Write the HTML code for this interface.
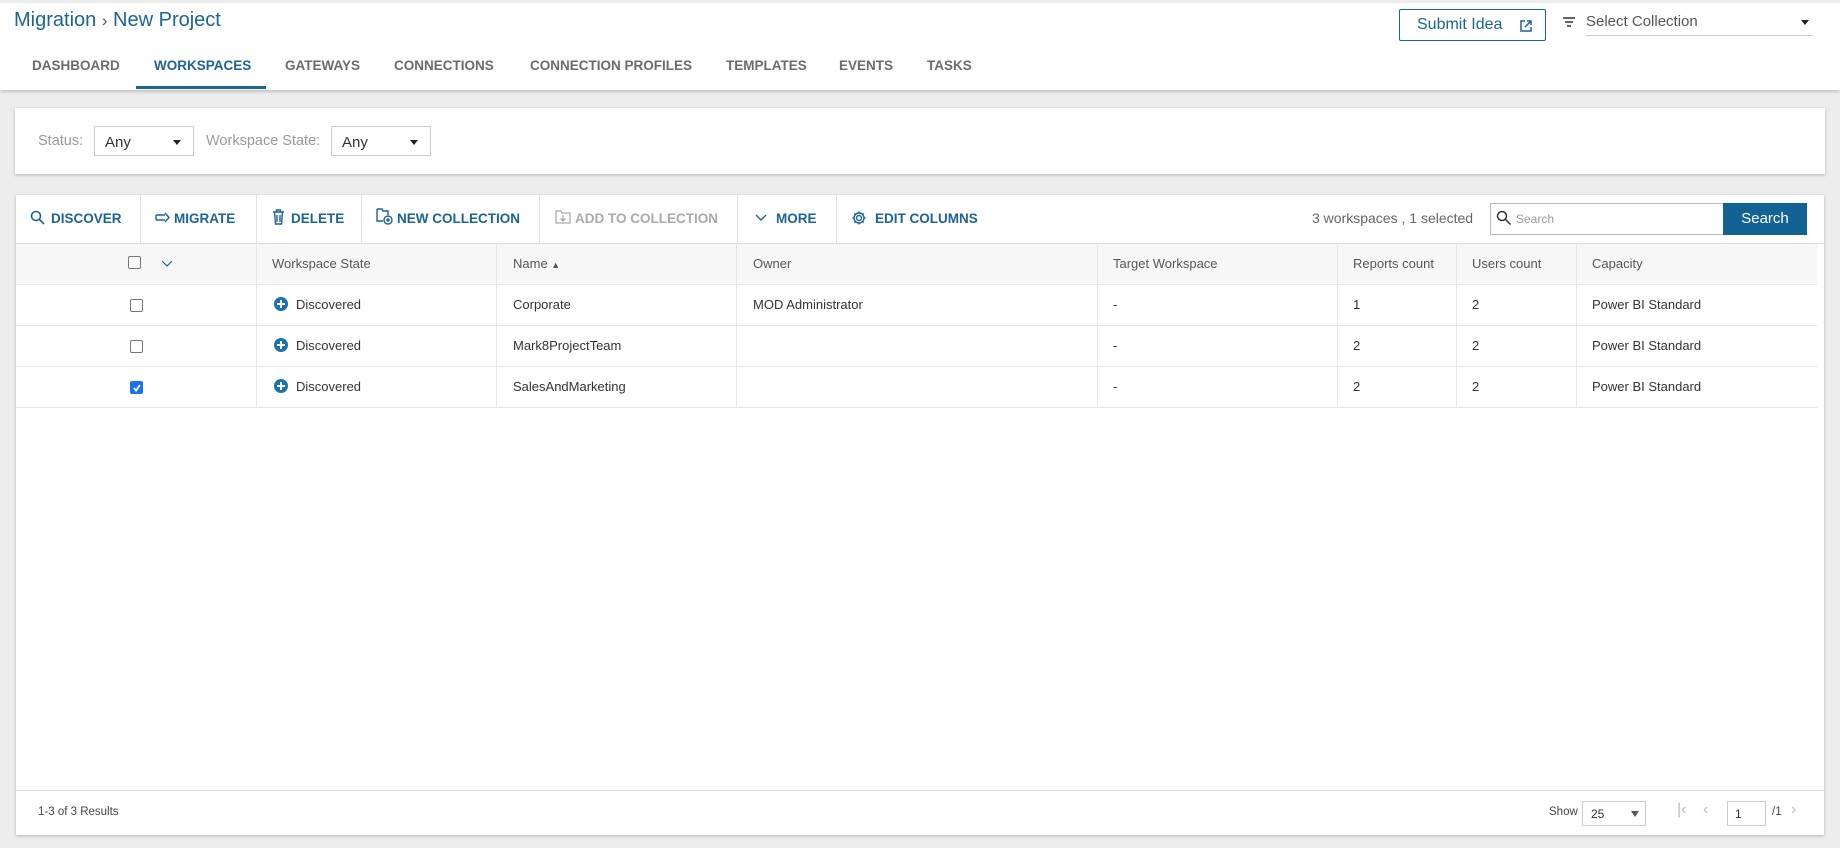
<!DOCTYPE html>
<html><head><meta charset="utf-8"><style>
*{box-sizing:border-box;margin:0;padding:0}
body{width:1840px;height:848px;background:#ededed;font-family:"Liberation Sans",sans-serif;position:relative;overflow:hidden;color:#333}
.a{position:absolute;white-space:nowrap}
#hdr{position:absolute;left:0;top:3px;width:1840px;height:87px;background:#fff;box-shadow:0 2px 3px rgba(0,0,0,.18)}
.tab{position:absolute;top:58px;font-size:13.5px;font-weight:bold;color:#6b6b6b}
.panel{position:absolute;background:#fff;box-shadow:0 1px 3px rgba(0,0,0,.25)}
.sel{position:absolute;border:1px solid #ccc;background:#fff;font-size:15px;color:#333;padding:7px 10px}
.sel:after{content:"";position:absolute;right:12px;top:13px;border:4px solid transparent;border-top:5px solid #222}
.tb{position:absolute;top:211px;font-size:13.5px;font-weight:bold;color:#1b6496}
.vs{position:absolute;top:195px;width:1px;height:48px;background:#e2e2e2}
.cell{position:absolute;font-size:13px;color:#333}
.hl{position:absolute;left:16px;width:1801px;height:1px;background:#e6e6e6}
.vl{position:absolute;width:1px;background:#e6e6e6;top:243px;height:164px}
.cb{position:absolute;width:13px;height:13px;border:1px solid #777;border-radius:2px;background:#fff}
.disc{position:absolute;width:14px;height:14px;border-radius:50%;background:#1a73b0}
.disc:before{content:"";position:absolute;left:3px;top:6px;width:8px;height:2px;background:#fff}
.disc:after{content:"";position:absolute;left:6px;top:3px;width:2px;height:8px;background:#fff}
</style></head><body>
<div id="hdr"></div>
<div class="a" style="left:14px;top:9px;font-size:20px;color:#1b6496">Migration <span style="font-size:17px;color:#555">&#8250;</span> New Project</div>
<div class="a" style="left:1399px;top:9px;width:147px;height:32px;border:1px solid #1b6496;border-radius:2px;font-size:16px;color:#1b6496;padding:6px 0 0 17px">Submit Idea
<svg style="position:absolute;left:120px;top:10px" width="12" height="12" viewBox="0 0 12 12" fill="none" stroke="#1b6496" stroke-width="1.5"><path d="M5 1H1v10h10V7M7 1h4v4M11 1L5 7"/></svg></div>
<svg class="a" style="left:1563px;top:17px" width="12" height="10" viewBox="0 0 12 10" stroke="#333" stroke-width="1.5"><path d="M0 1h12M2 5h8M4 9h4"/></svg>
<div class="a" style="left:1586px;top:13px;font-size:15px;color:#555">Select Collection</div>
<div class="a" style="left:1586px;top:35px;width:227px;height:1px;background:#ccc"></div>
<div class="a" style="left:1801px;top:20px;border:4px solid transparent;border-top:5px solid #222"></div>
<div class="tab" style="left:32px">DASHBOARD</div>
<div class="tab" style="left:154px;color:#1b6496">WORKSPACES</div>
<div class="a" style="left:136px;top:86px;width:130px;height:3px;background:#1b6496"></div>
<div class="tab" style="left:285px">GATEWAYS</div>
<div class="tab" style="left:394px">CONNECTIONS</div>
<div class="tab" style="left:530px">CONNECTION PROFILES</div>
<div class="tab" style="left:726px">TEMPLATES</div>
<div class="tab" style="left:839px">EVENTS</div>
<div class="tab" style="left:927px">TASKS</div>

<div class="panel" style="left:15px;top:108px;width:1810px;height:66px"></div>
<div class="a" style="left:38px;top:133px;font-size:14.5px;color:#999">Status:</div>
<div class="sel" style="left:94px;top:126px;width:100px;height:30px">Any</div>
<div class="a" style="left:206px;top:133px;font-size:14.5px;color:#999">Workspace State:</div>
<div class="sel" style="left:331px;top:126px;width:100px;height:30px">Any</div>

<div class="panel" style="left:16px;top:195px;width:1808px;height:640px"></div>
<div class="hl" style="top:243px;width:1808px;background:#ddd"></div>
<div class="a" style="left:16px;top:244px;width:1801px;height:40px;background:#f7f7f7"></div>
<div class="vs" style="left:140px"></div><div class="vs" style="left:256px"></div><div class="vs" style="left:361px"></div><div class="vs" style="left:539px"></div><div class="vs" style="left:737px"></div><div class="vs" style="left:836px"></div>
<svg class="a" style="left:30px;top:210px" width="15" height="15" viewBox="0 0 15 15" fill="none" stroke="#1b6496" stroke-width="1.6"><circle cx="6" cy="6" r="4.5"/><path d="M9.5 9.5L14 14"/></svg>
<div class="tb" style="left:51px">DISCOVER</div>
<svg class="a" style="left:155px;top:212px" width="16" height="11" viewBox="0 0 16 11" fill="none" stroke="#1b6496" stroke-width="1.4"><path d="M1 3h9M1 8h9M1 3v5M10 1l4 4.5-4 4.5"/></svg>
<div class="tb" style="left:174px">MIGRATE</div>
<svg class="a" style="left:272px;top:209px" width="13" height="16" viewBox="0 0 13 16" fill="none" stroke="#1b6496" stroke-width="1.4"><path d="M1 3h11M4.5 3V1h4v2M2.5 3l1 12h6l1-12M5 6v7M8 6v7"/></svg>
<div class="tb" style="left:291px">DELETE</div>
<svg class="a" style="left:376px;top:208px" width="17" height="17" viewBox="0 0 17 17" fill="none" stroke="#1b6496" stroke-width="1.4"><path d="M1 1h5l1 2h5v4M1 1v12h6"/><circle cx="12" cy="12" r="4"/><path d="M12 10v4M10 12h4"/></svg>
<div class="tb" style="left:397px">NEW COLLECTION</div>
<svg class="a" style="left:555px;top:210px" width="16" height="14" viewBox="0 0 16 14" fill="none" stroke="#aaa" stroke-width="1.3"><path d="M1 1h5l1 2h8v10H1z M8 5v6M5.5 8.5L8 11l2.5-2.5"/></svg>
<div class="tb" style="left:575px;color:#aaa">ADD TO COLLECTION</div>
<svg class="a" style="left:755px;top:214px" width="12" height="8" viewBox="0 0 12 8" fill="none" stroke="#1b6496" stroke-width="1.4"><path d="M1 1l5 5 5-5"/></svg>
<div class="tb" style="left:776px">MORE</div>
<svg class="a" style="left:851px;top:210px" width="16" height="16" viewBox="0 0 16 16" fill="none" stroke="#1b6496" stroke-width="1.4"><circle cx="8" cy="8" r="2.5"/><path d="M8 1.5v2M8 12.5v2M1.5 8h2M12.5 8h2M3.4 3.4l1.4 1.4M11.2 11.2l1.4 1.4M3.4 12.6l1.4-1.4M11.2 4.8l1.4-1.4"/><circle cx="8" cy="8" r="5"/></svg>
<div class="tb" style="left:875px">EDIT COLUMNS</div>
<div class="a" style="left:1312px;top:210px;font-size:14px;color:#666">3 workspaces , 1 selected</div>
<div class="a" style="left:1490px;top:203px;width:234px;height:32px;border:1px solid #bbb;background:#fff"></div>
<svg class="a" style="left:1496px;top:210px" width="16" height="16" viewBox="0 0 16 16" fill="none" stroke="#333" stroke-width="1.5"><circle cx="6" cy="6" r="4.5"/><path d="M9.5 9.5L14.5 14.5"/></svg>
<div class="a" style="left:1516px;top:212px;font-size:12px;color:#999">Search</div>
<div class="a" style="left:1723px;top:203px;width:84px;height:32px;background:#126293;color:#fff;font-size:15px;text-align:center;line-height:32px">Search</div>

<div class="hl" style="top:284px"></div><div class="hl" style="top:325px"></div><div class="hl" style="top:366px"></div><div class="hl" style="top:407px"></div>
<div class="vl" style="left:256px"></div><div class="vl" style="left:496px"></div><div class="vl" style="left:736px"></div><div class="vl" style="left:1097px"></div><div class="vl" style="left:1337px"></div><div class="vl" style="left:1456px"></div><div class="vl" style="left:1576px"></div>
<div class="cb" style="left:128px;top:256px"></div>
<svg class="a" style="left:161px;top:260px" width="12" height="7" viewBox="0 0 12 7" fill="none" stroke="#1b6496" stroke-width="1.2"><path d="M1 1l5 5 5-5"/></svg>
<div class="cell" style="left:272px;top:256px;color:#555">Workspace State</div>
<div class="cell" style="left:513px;top:256px;color:#555">Name <span style="font-size:9px">&#9650;</span></div>
<div class="cell" style="left:753px;top:256px;color:#555">Owner</div>
<div class="cell" style="left:1113px;top:256px;color:#555">Target Workspace</div>
<div class="cell" style="left:1353px;top:256px;color:#555">Reports count</div>
<div class="cell" style="left:1472px;top:256px;color:#555">Users count</div>
<div class="cell" style="left:1592px;top:256px;color:#555">Capacity</div>

<div class="cb" style="left:130px;top:299px"></div>
<div class="disc" style="left:274px;top:297px"></div><div class="cell" style="left:296px;top:297px">Discovered</div>
<div class="cell" style="left:513px;top:297px">Corporate</div><div class="cell" style="left:753px;top:297px">MOD Administrator</div>
<div class="cell" style="left:1113px;top:297px">-</div><div class="cell" style="left:1353px;top:297px">1</div><div class="cell" style="left:1472px;top:297px">2</div><div class="cell" style="left:1592px;top:297px">Power BI Standard</div>

<div class="cb" style="left:130px;top:340px"></div>
<div class="disc" style="left:274px;top:338px"></div><div class="cell" style="left:296px;top:338px">Discovered</div>
<div class="cell" style="left:513px;top:338px">Mark8ProjectTeam</div>
<div class="cell" style="left:1113px;top:338px">-</div><div class="cell" style="left:1353px;top:338px">2</div><div class="cell" style="left:1472px;top:338px">2</div><div class="cell" style="left:1592px;top:338px">Power BI Standard</div>

<div class="cb" style="left:130px;top:381px;background:#1a73e8;border-color:#1a73e8"><svg style="position:absolute;left:1px;top:1px" width="10" height="10" viewBox="0 0 10 10" fill="none" stroke="#fff" stroke-width="1.8"><path d="M2 5l2 2.5L8 2"/></svg></div>
<div class="disc" style="left:274px;top:379px"></div><div class="cell" style="left:296px;top:379px">Discovered</div>
<div class="cell" style="left:513px;top:379px">SalesAndMarketing</div>
<div class="cell" style="left:1113px;top:379px">-</div><div class="cell" style="left:1353px;top:379px">2</div><div class="cell" style="left:1472px;top:379px">2</div><div class="cell" style="left:1592px;top:379px">Power BI Standard</div>

<div class="a" style="left:16px;top:790px;width:1808px;height:1px;background:#ddd"></div>
<div class="a" style="left:38px;top:806px;font-size:11.5px;color:#444">1-3 of 3 Results</div>
<div class="a" style="left:1549px;top:806px;font-size:11.5px;color:#444">Show</div>
<div class="a" style="left:1582px;top:801px;width:64px;height:25px;border:1px solid #ccc;font-size:12px;padding:5px 0 0 8px">25</div>
<div class="a" style="left:1631px;top:811px;border:4px solid transparent;border-top:6px solid #555"></div>
<div class="a" style="left:1677px;top:801px;font-size:16px;color:#bbb">|&#8249;</div>
<div class="a" style="left:1703px;top:801px;font-size:16px;color:#bbb">&#8249;</div>
<div class="a" style="left:1727px;top:801px;width:39px;height:25px;border:1px solid #ccc;font-size:12px;padding:5px 0 0 7px">1</div>
<div class="a" style="left:1772px;top:806px;font-size:11.5px;color:#444">/1</div>
<div class="a" style="left:1791px;top:801px;font-size:16px;color:#bbb">&#8250;</div>
</body></html>
